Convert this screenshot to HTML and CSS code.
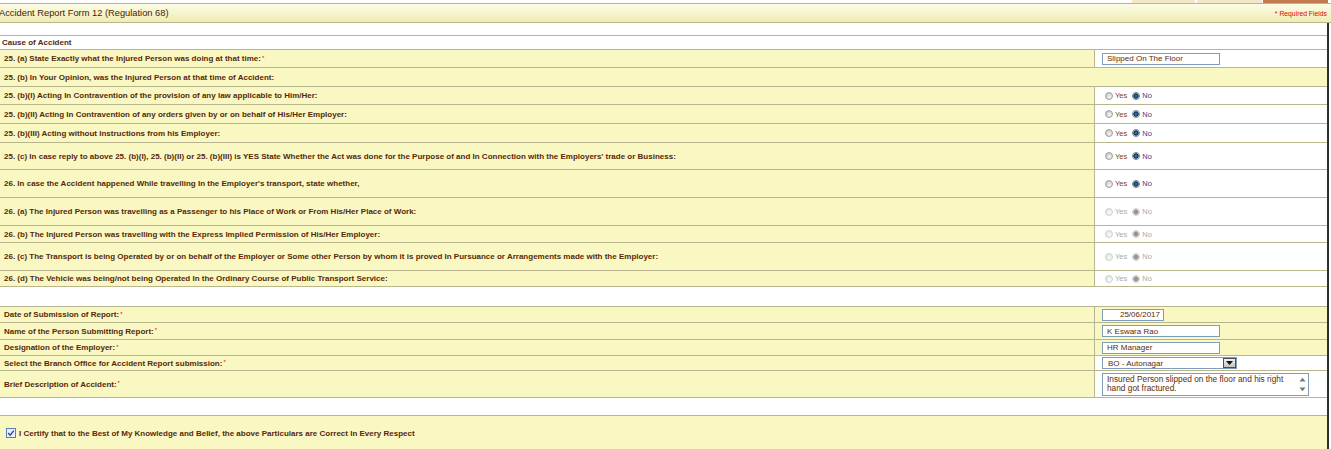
FILE: index.html
```html
<!DOCTYPE html>
<html lang="en">
<head>
<meta charset="utf-8">
<title>Accident Report Form 12</title>
<link rel="stylesheet" href="styles.css">
</head>
<body>
<div class="page">
  <div class="topstrip">
    <span class="tab tab-a"></span><span class="tab tab-b"></span><span class="tab tab-c"></span>
  </div>
  <div class="titlebar">
    <span class="title">Accident Report Form 12 (Regulation 68)</span>
    <span class="reqnote">* Required Fields</span>
  </div>

  <div class="form">
    <div class="row blank h13"></div>
    <div class="row section h14">Cause of Accident</div>

    <div class="row h18">
      <div class="lbl">25. (a) State Exactly what the Injured Person was doing at that time:<span class="req">*</span></div>
      <div class="val"><input class="txt w118" type="text" value="Slipped On The Floor"></div>
    </div>

    <div class="row full h19">25. (b) In Your Opinion, was the Injured Person at that time of Accident:</div>

    <div class="row h18">
      <div class="lbl">25. (b)(I) Acting In Contravention of the provision of any law applicable to Him/Her:</div>
      <div class="val"><span class="yn"><input class="rd" type="radio" name="q1"><span class="yes">Yes</span><input class="rd" type="radio" name="q1" checked><span class="no">No</span></span></div>
    </div>

    <div class="row h19">
      <div class="lbl">25. (b)(II) Acting In Contravention of any orders given by or on behalf of His/Her Employer:</div>
      <div class="val"><span class="yn"><input class="rd" type="radio" name="q2"><span class="yes">Yes</span><input class="rd" type="radio" name="q2" checked><span class="no">No</span></span></div>
    </div>

    <div class="row h19">
      <div class="lbl">25. (b)(III) Acting without Instructions from his Employer:</div>
      <div class="val"><span class="yn"><input class="rd" type="radio" name="q3"><span class="yes">Yes</span><input class="rd" type="radio" name="q3" checked><span class="no">No</span></span></div>
    </div>

    <div class="row h27">
      <div class="lbl">25. (c) In case reply to above 25. (b)(I), 25. (b)(II) or 25. (b)(III) is YES State Whether the Act was done for the Purpose of and In Connection with the Employers' trade or Business:</div>
      <div class="val"><span class="yn"><input class="rd" type="radio" name="q4"><span class="yes">Yes</span><input class="rd" type="radio" name="q4" checked><span class="no">No</span></span></div>
    </div>

    <div class="row h28">
      <div class="lbl">26. In case the Accident happened While travelling In the Employer's transport, state whether,</div>
      <div class="val"><span class="yn"><input class="rd" type="radio" name="q5"><span class="yes">Yes</span><input class="rd" type="radio" name="q5" checked><span class="no">No</span></span></div>
    </div>

    <div class="row h28">
      <div class="lbl">26. (a) The Injured Person was travelling as a Passenger to his Place of Work or From His/Her Place of Work:</div>
      <div class="val"><span class="yn off"><input class="rd" type="radio" name="q6" disabled><span class="yes">Yes</span><input class="rd" type="radio" name="q6" checked disabled><span class="no">No</span></span></div>
    </div>

    <div class="row h17">
      <div class="lbl">26. (b) The Injured Person was travelling with the Express Implied Permission of His/Her Employer:</div>
      <div class="val"><span class="yn off"><input class="rd" type="radio" name="q7" disabled><span class="yes">Yes</span><input class="rd" type="radio" name="q7" checked disabled><span class="no">No</span></span></div>
    </div>

    <div class="row h28">
      <div class="lbl">26. (c) The Transport is being Operated by or on behalf of the Employer or Some other Person by whom it is proved In Pursuance or Arrangements made with the Employer:</div>
      <div class="val"><span class="yn off"><input class="rd" type="radio" name="q8" disabled><span class="yes">Yes</span><input class="rd" type="radio" name="q8" checked disabled><span class="no">No</span></span></div>
    </div>

    <div class="row h16">
      <div class="lbl">26. (d) The Vehicle was being/not being Operated In the Ordinary Course of Public Transport Service:</div>
      <div class="val"><span class="yn off"><input class="rd" type="radio" name="q9" disabled><span class="yes">Yes</span><input class="rd" type="radio" name="q9" checked disabled><span class="no">No</span></span></div>
    </div>

    <div class="row blank h20"></div>

    <div class="row h16">
      <div class="lbl">Date of Submission of Report:<span class="req">*</span></div>
      <div class="val val-y"><input class="txt w62 right" type="text" value="25/06/2017"></div>
    </div>

    <div class="row h17">
      <div class="lbl">Name of the Person Submitting Report:<span class="req">*</span></div>
      <div class="val val-y"><input class="txt w118" type="text" value="K Eswara Rao"></div>
    </div>

    <div class="row h16">
      <div class="lbl">Designation of the Employer:<span class="req">*</span></div>
      <div class="val val-y"><input class="txt w118" type="text" value="HR Manager"></div>
    </div>

    <div class="row h15">
      <div class="lbl">Select the Branch Office for Accident Report submission:<span class="req">*</span></div>
      <div class="val">
        <div class="sel">
          <span class="sel-text">BO - Autonagar</span>
          <span class="sel-btn"><svg width="9" height="6" viewBox="0 0 9 6"><path d="M1 1 L8 1 L4.5 5 Z" fill="#111"/></svg></span>
        </div>
      </div>
    </div>

    <div class="row h27">
      <div class="lbl">Brief Description of Accident:<span class="req">*</span></div>
      <div class="val">
        <div class="area">
          <textarea class="area-text" readonly>Insured Person slipped on the floor and his right hand got fractured.</textarea>
          <div class="area-scroll">
            <svg width="7" height="5" viewBox="0 0 7 5"><path d="M0.5 4.5 L3.5 0.8 L6.5 4.5 Z" fill="#777"/></svg>
            <svg width="7" height="5" viewBox="0 0 7 5"><path d="M0.5 0.5 L3.5 4.2 L6.5 0.5 Z" fill="#777"/></svg>
          </div>
        </div>
      </div>
    </div>

    <div class="row blank h18"></div>

    <div class="row full certify">
      <span class="chk"><svg width="10" height="10" viewBox="0 0 10 10"><rect x="0.5" y="0.5" width="9" height="9" fill="#e9eef7" stroke="#5b7fb8"/><path d="M2.2 5 L4.2 7.2 L7.8 2.6" fill="none" stroke="#3a3fa8" stroke-width="1.4"/></svg></span>
      <span class="certify-text">I Certify that to the Best of My Knowledge and Belief, the above Particulars are Correct In Every Respect</span>
    </div>
  </div>
</div>
</body>
</html>
```

FILE: styles.css
```css
html, body {
  margin: 0;
  padding: 0;
  background: #ffffff;
}

body {
  font-family: "Liberation Sans", Arial, sans-serif;
  color: #5a2b0b;
}

.page {
  width: 1331px;
}

/* top strip with tabs */
.topstrip {
  height: 3px;
  display: flex;
  justify-content: flex-end;
  padding-right: 3px;
  border-bottom: 1px solid #b9b68f;
}

.tab {
  display: block;
  height: 3px;
  width: 65px;
  background: #f6e8c6;
}

.tab-a { width: 63px; }
.tab-b { margin-left: 2px; }
.tab-c { margin-left: 1px; background: #c27a4f; }

/* title bar */
.titlebar {
  height: 18px;
  display: flex;
  align-items: center;
  justify-content: space-between;
  padding-right: 4px;
  background: linear-gradient(#fcfce6, #efedb2);
  border-bottom: 1px solid #b9b68f;
}

.title {
  font-size: 9.3px;
  color: #3f2206;
  margin-left: -1px;
}

.reqnote {
  font-size: 6.8px;
  color: #e60000;
}

/* form grid */
.form {
  width: 1329px;
  box-sizing: border-box;
  border-right: 2px solid #2f2f2f;
}

.row {
  display: flex;
  box-sizing: border-box;
  border-bottom: 1px solid #b9b68f;
  font-size: 8px;
  font-weight: bold;
  color: #56280a;
}

.h13 { height: 13px; }
.h14 { height: 14px; }
.h15 { height: 15px; }
.h16 { height: 16px; }
.h17 { height: 17px; }
.h18 { height: 18px; }
.h19 { height: 19px; }
.h20 { height: 20px; }
.h27 { height: 27px; }
.h28 { height: 28px; }

.blank {
  background: #ffffff;
}

.section {
  background: #ffffff;
  align-items: center;
  padding-left: 2px;
}

.full {
  background: #faf8c2;
  align-items: center;
  padding-left: 4px;
}

.lbl {
  width: 1095px;
  flex: none;
  box-sizing: border-box;
  border-right: 1px solid #b9b68f;
  background: #faf8c2;
  padding-left: 4px;
  display: flex;
  align-items: center;
  white-space: nowrap;
}

.req {
  color: #e60000;
  font-size: 6px;
  font-weight: normal;
  margin-left: 1px;
  position: relative;
  top: -1px;
}

.val {
  flex: 1;
  display: flex;
  align-items: center;
  padding-left: 7px;
  background: #ffffff;
}

.val-y {
  background: #faf8c2;
}

/* text inputs */
.txt {
  box-sizing: border-box;
  height: 12px;
  margin: 0;
  padding: 0 4px;
  border: 1px solid #7f9db9;
  background: #ffffff;
  font-family: "Liberation Sans", Arial, sans-serif;
  font-size: 8px;
  color: #5a2b0b;
  outline: none;
}

.w118 { width: 118px; }
.w62 { width: 62px; }
.right { text-align: right; padding-right: 3px; }

/* radios */
.yn {
  display: flex;
  align-items: center;
  font-size: 7.5px;
  font-weight: normal;
}

.rd {
  appearance: none;
  -webkit-appearance: none;
  box-sizing: border-box;
  width: 8px;
  height: 8px;
  margin: 0 2px 0 3px;
  border-radius: 50%;
  border: 1px solid #a0a0a0;
  background: radial-gradient(circle at 60% 65%, #f7f7f7 0, #dcdcdc 45%, #b4b4b4 100%);
}

.rd:checked {
  border-color: #6f7f8f;
  background: radial-gradient(circle, #3a8ed0 0, #17507f 1.4px, #0b2c50 2.4px, #dfe5ea 2.9px, #b9bfc5 100%);
}

.yes { color: #844218; margin-right: 2px; }
.no { color: #3d3a8c; }

.off .rd {
  border-color: #d0d0d0;
  background: radial-gradient(circle at 60% 65%, #fbfbfb 0, #ececec 50%, #d6d6d6 100%);
}

.off .rd:checked {
  background: radial-gradient(circle, #a2a2a2 0, #8e8e8e 1.6px, #bdbdbd 2.6px, #f2f2f2 3px, #dedede 100%);
}

.off .yes, .off .no { color: #a9a9a9; }

/* select */
.sel {
  box-sizing: border-box;
  width: 135px;
  height: 12px;
  border: 1px solid #7f9db9;
  background: #ffffff;
  display: flex;
  align-items: center;
  justify-content: space-between;
  font-size: 8px;
  font-weight: normal;
  color: #5a2b0b;
}

.sel-text {
  padding-left: 5px;
}

.sel-btn {
  box-sizing: border-box;
  width: 13px;
  height: 10px;
  border: 1px solid #4f4f4f;
  background: linear-gradient(#f2f2f2, #c4c4c4);
  display: flex;
  align-items: center;
  justify-content: center;
}

/* textarea */
.area {
  box-sizing: border-box;
  width: 207px;
  height: 23px;
  border: 1px solid #7f9db9;
  background: #ffffff;
  display: flex;
}

.area-text {
  flex: 1;
  margin: 0;
  padding: 1px 4px 0 4px;
  border: none;
  resize: none;
  overflow: hidden;
  background: transparent;
  font-family: "Liberation Sans", Arial, sans-serif;
  font-size: 8.3px;
  line-height: 9.5px;
  color: #5a2b0b;
  outline: none;
}

.area-scroll {
  width: 12px;
  display: flex;
  flex-direction: column;
  align-items: center;
  justify-content: space-between;
  padding: 3px 0 3px;
}

/* certify */
.certify {
  height: 34px;
  padding-left: 6px;
  padding-top: 12px;
  align-items: flex-start;
  gap: 3px;
  border-bottom: none;
}

.chk {
  display: flex;
}

.certify-text {
  line-height: 10px;
  margin-top: 1px;
}
```
